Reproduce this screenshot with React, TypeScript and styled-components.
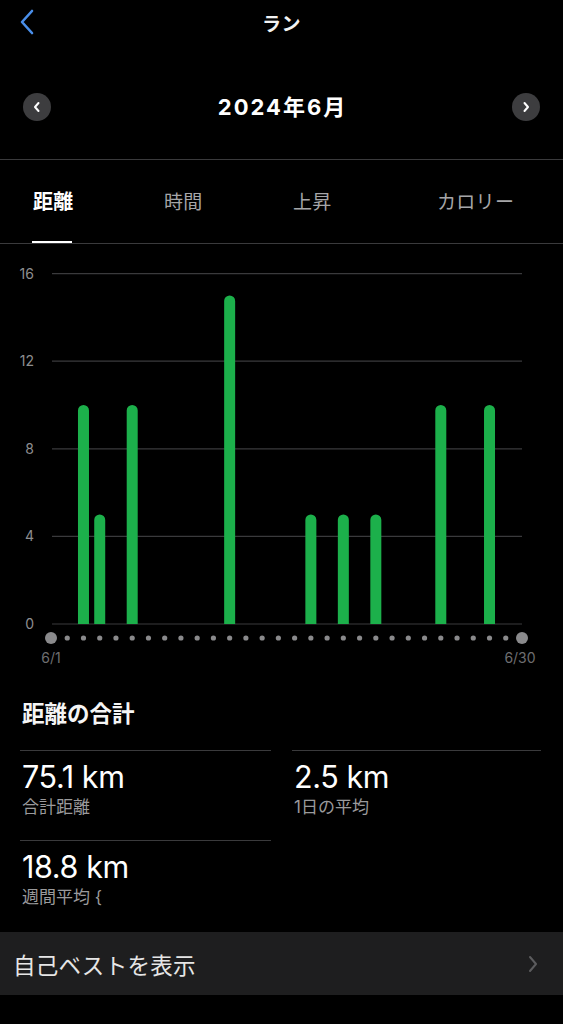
import React from "react";
import styled, { createGlobalStyle } from "styled-components";

const Global = createGlobalStyle`
  html, body { margin: 0; padding: 0; background: #000; }
  body { font-family: Inter, "Noto Sans CJK JP", sans-serif; color: #fff; }
  * { box-sizing: border-box; }
`;

const Page = styled.div`
  width: 563px;
  min-height: 1024px;
  background: #000;
  display: flex;
  flex-direction: column;
`;

const Header = styled.div`
  height: 44px;
  display: flex;
  align-items: center;
  justify-content: center;
  position: relative;
`;

const BackButton = styled.div`
  position: absolute;
  left: 16px;
  top: 8px;
  width: 22px;
  height: 28px;
  display: flex;
  align-items: center;
  justify-content: center;
`;

const Title = styled.div`
  font-size: 19px;
  font-weight: 600;
  color: #f2f2f2;
  letter-spacing: 0.5px;
`;

const MonthRow = styled.div`
  display: flex;
  align-items: center;
  justify-content: space-between;
  padding: 49px 23px 38px 23px;
  border-bottom: 1.5px solid #3a3a3c;
`;

const CircleButton = styled.div`
  width: 28px;
  height: 28px;
  border-radius: 50%;
  background: #3d3d3f;
  display: flex;
  align-items: center;
  justify-content: center;
`;

const MonthLabel = styled.div`
  font-size: 22px;
  font-weight: 700;
  color: #fff;
  line-height: 28px;
  letter-spacing: 2px;
  padding-left: 2px;
`;

const Tabs = styled.div`
  display: grid;
  grid-template-columns: 131px 129px 144px auto;
  padding-left: 33px;
  height: 84px;
  border-bottom: 1.5px solid #3a3a3c;
`;

const Tab = styled.div<{ $active?: boolean }>`
  position: relative;
  display: flex;
  align-items: center;
  font-size: ${(p) => (p.$active ? "20px" : "19px")};
  font-weight: ${(p) => (p.$active ? 700 : 400)};
  color: ${(p) => (p.$active ? "#fff" : "#a6a6a8")};
  padding-bottom: 2px;
  letter-spacing: 0.3px;
`;

const Underline = styled.div`
  position: absolute;
  left: -1px;
  bottom: 0;
  width: 40px;
  height: 2px;
  background: #fff;
`;

const ChartWrap = styled.div`
  height: 426px;
`;

const Section = styled.div`
  padding: 29px 22px 0 20px;
`;

const SectionTitle = styled.div`
  font-size: 22.5px;
  font-weight: 700;
  line-height: 30px;
  padding-left: 2px;
  color: #f5f5f5;
`;

const StatsGrid = styled.div`
  display: grid;
  grid-template-columns: 251px 249px;
  column-gap: 21px;
  margin-top: 21px;
`;

const Stat = styled.div`
  border-top: 1.5px solid #3a3a3c;
  padding: 9px 0 22px 2px;
  display: flex;
  flex-direction: column;
`;

const StatValue = styled.div`
  font-size: 30.5px;
  line-height: 34px;
  color: #fff;
  font-weight: 400;
  letter-spacing: -0.4px;
`;

const StatLabel = styled.div`
  margin-top: 2px;
  font-size: 17px;
  line-height: 22px;
  color: #9a9a9c;
`;

const BestRow = styled.div`
  margin-top: 2px;
  height: 63px;
  background: #1e1e1f;
  display: flex;
  align-items: center;
  justify-content: space-between;
  padding: 0 24px 0 13px;
`;

const BestText = styled.div`
  font-size: 22.5px;
  color: #e6e6e6;
  letter-spacing: 0.3px;
`;

const data: Record<number, number> = { 3: 10, 4: 5, 6: 10, 12: 15, 17: 5, 19: 5, 21: 5, 25: 10, 28: 10 };

const X0 = 51;
const X1 = 522;
const STEP = (X1 - X0) / 29;
const BASE = 380;
const UNIT = 21.9;

function Chart() {
  const grid = [16, 12, 8, 4, 0];
  const days = Array.from({ length: 30 }, (_, i) => i + 1);
  return (
    <svg width="563" height="426" viewBox="0 0 563 426">
      {grid.map((g) => {
        const y = BASE - g * UNIT;
        return (
          <g key={g}>
            <line x1={52} x2={522} y1={y} y2={y} stroke="#3a3a3c" strokeWidth={1.2} />
            <text
              x={34}
              y={y + 5}
              textAnchor="end"
              fontSize="14"
              fill="#8e8e90"
              fontFamily="Inter, sans-serif"
            >
              {g}
            </text>
          </g>
        );
      })}
      {Object.entries(data).map(([d, v]) => {
        const x = X0 + (Number(d) - 1) * STEP;
        const top = BASE - v * UNIT;
        const r = 5.5;
        return (
          <path
            key={d}
            d={`M ${x - r} ${BASE} V ${top + r} A ${r} ${r} 0 0 1 ${x + r} ${top + r} V ${BASE} Z`}
            fill="#1cb04b"
          />
        );
      })}
      {days.map((d) => {
        const x = X0 + (d - 1) * STEP;
        const big = d === 1 || d === 30;
        return <circle key={d} cx={x} cy={394} r={big ? 6 : 2.6} fill="#8a8a8c" />;
      })}
      <text x={51} y={419} textAnchor="middle" fontSize="14" fill="#6e6e70" fontFamily="Inter, sans-serif">
        6/1
      </text>
      <text x={520} y={419} textAnchor="middle" fontSize="14" fill="#6e6e70" fontFamily="Inter, sans-serif">
        6/30
      </text>
    </svg>
  );
}

export default function App() {
  return (
    <Page>
      <Global />
      <Header>
        <BackButton>
          <svg width="16" height="26" viewBox="0 0 16 26">
            <path d="M13 2 L3 13 L13 24" fill="none" stroke="#4a8fea" strokeWidth="2.6" strokeLinecap="round" strokeLinejoin="round" />
          </svg>
        </BackButton>
        <Title>ラン</Title>
      </Header>
      <MonthRow>
        <CircleButton>
          <svg width="10" height="12" viewBox="0 0 10 12">
            <path d="M6.5 2 L3 6 L6.5 10" fill="none" stroke="#fff" strokeWidth="2" strokeLinecap="round" strokeLinejoin="round" />
          </svg>
        </CircleButton>
        <MonthLabel>2024年6月</MonthLabel>
        <CircleButton>
          <svg width="10" height="12" viewBox="0 0 10 12">
            <path d="M3.5 2 L7 6 L3.5 10" fill="none" stroke="#fff" strokeWidth="2" strokeLinecap="round" strokeLinejoin="round" />
          </svg>
        </CircleButton>
      </MonthRow>
      <Tabs>
        <Tab $active>
          距離
          <Underline />
        </Tab>
        <Tab>時間</Tab>
        <Tab>上昇</Tab>
        <Tab>カロリー</Tab>
      </Tabs>
      <ChartWrap>
        <Chart />
      </ChartWrap>
      <Section>
        <SectionTitle>距離の合計</SectionTitle>
        <StatsGrid>
          <Stat>
            <StatValue>75.1 km</StatValue>
            <StatLabel>合計距離</StatLabel>
          </Stat>
          <Stat>
            <StatValue>2.5 km</StatValue>
            <StatLabel>1日の平均</StatLabel>
          </Stat>
          <Stat>
            <StatValue>18.8 km</StatValue>
            <StatLabel>週間平均 {"{"}</StatLabel>
          </Stat>
        </StatsGrid>
      </Section>
      <BestRow>
        <BestText>自己ベストを表示</BestText>
        <svg width="12" height="20" viewBox="0 0 12 20">
          <path d="M3 3 L9 10 L3 17" fill="none" stroke="#5c5c5e" strokeWidth="2" strokeLinecap="round" strokeLinejoin="round" />
        </svg>
      </BestRow>
    </Page>
  );
}
